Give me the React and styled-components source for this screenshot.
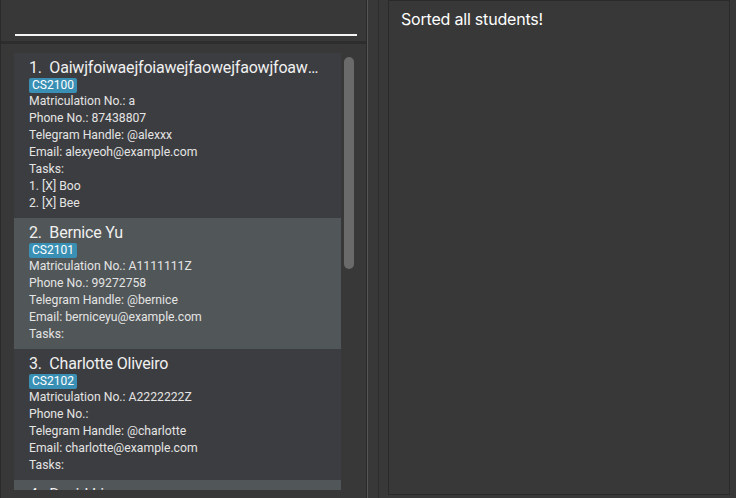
import React from 'react'
import styled, { createGlobalStyle } from 'styled-components'

const GlobalStyle = createGlobalStyle`
    html, body {
        margin: 0;
        padding: 0;
        background: #383838;
    }
    * {
        box-sizing: border-box;
    }
`

const Window = styled.div`
    width: 736px;
    height: 498px;
    display: flex;
    background: #383838;
    border-left: 1px solid #2a2a2a;
    font-family: Roboto, "Liberation Sans", sans-serif;
    overflow: hidden;
`

const LeftPane = styled.div`
    width: 366px;
    height: 100%;
    display: flex;
    flex-direction: column;
    border-right: 1px solid #2a2a2a;
    box-shadow: 1px 0 0 #555555;
`

const SearchBar = styled.div`
    height: 41px;
    padding: 34px 9px 0 14px;
`

const SearchLine = styled.div`
    height: 2px;
    background: #f4f4f4;
`

const Divider = styled.div`
    height: 3px;
    background: #2d2d2d;
`

const ListArea = styled.div`
    flex: 1;
    display: flex;
    padding: 9px 0 8px 13px;
    min-height: 0;
`

const List = styled.div`
    width: 327px;
    height: 100%;
    overflow: hidden;
    display: flex;
    flex-direction: column;
`

const Track = styled.div`
    width: 25px;
    padding: 4px 0 0 3px;
`

const Thumb = styled.div`
    width: 10px;
    height: 212px;
    border-radius: 5px;
    background: #6a6a6a;
`

const Card = styled.div`
    flex: none;
    padding: 5px 15px 6px 15px;
    display: flex;
    flex-direction: column;
    align-items: flex-start;
    background: ${(p) => (p.odd ? '#515658' : '#3c3d40')};
`

const Name = styled.div`
    width: 100%;
    font-size: 16px;
    line-height: 19px;
    color: #f0f0f0;
    white-space: nowrap;
    overflow: hidden;
    text-overflow: ellipsis;
    letter-spacing: -0.2px;
`

const Tag = styled.span`
    display: block;
    margin-top: 1px;
    padding: 0 3px;
    height: 15px;
    line-height: 15px;
    font-size: 12px;
    color: #ffffff;
    background: #3a8fb5;
    border-radius: 2px;
`

const Detail = styled.div`
    font-size: 12.2px;
    line-height: 17px;
    color: #e4e4e4;
    white-space: nowrap;
`

const Spacer = styled.div`
    width: 21px;
    display: flex;
    justify-content: center;
    padding-left: 1px;
`

const SpacerLine = styled.div`
    width: 1px;
    height: 100%;
    background: #2c2c2c;
`

const ResultBox = styled.div`
    width: 342px;
    height: 495px;
    border: 1px solid #2a2a2a;
    padding: 9px 12px;
    font-family: Inter, Roboto, sans-serif;
    font-size: 16px;
    line-height: 19px;
    color: #ffffff;
    letter-spacing: -0.2px;
`

const students = [
    {
        name: 'Oaiwjfoiwaejfoiawejfaowejfaowjfoawefoiawejfoiawe',
        tag: 'CS2100',
        matric: 'a',
        phone: '87438807',
        tele: '@alexxx',
        email: 'alexyeoh@example.com',
        tasks: ['[X] Boo', '[X] Bee'],
    },
    {
        name: 'Bernice Yu',
        tag: 'CS2101',
        matric: 'A1111111Z',
        phone: '99272758',
        tele: '@bernice',
        email: 'berniceyu@example.com',
        tasks: [],
    },
    {
        name: 'Charlotte Oliveiro',
        tag: 'CS2102',
        matric: 'A2222222Z',
        phone: '',
        tele: '@charlotte',
        email: 'charlotte@example.com',
        tasks: [],
    },
    {
        name: 'David Li',
        tag: 'CS2103',
        matric: 'A3333333Z',
        phone: '91031282',
        tele: '@david',
        email: 'lidavid@example.com',
        tasks: [],
    },
]

const StudentCard = ({ student, index }) => (
    <Card odd={index % 2 === 1}>
        <Name>{index + 1}.&nbsp; {student.name}</Name>
        <Tag>{student.tag}</Tag>
        <Detail>Matriculation No.: {student.matric}</Detail>
        <Detail>Phone No.: {student.phone}</Detail>
        <Detail>Telegram Handle: {student.tele}</Detail>
        <Detail>Email: {student.email}</Detail>
        <Detail>Tasks:</Detail>
        {student.tasks.map((t, i) => (
            <Detail key={i}>
                {i + 1}. {t}
            </Detail>
        ))}
    </Card>
)

const App = () => {
    return (
        <>
            <GlobalStyle />
            <Window>
                <LeftPane>
                    <SearchBar>
                        <SearchLine />
                    </SearchBar>
                    <Divider />
                    <ListArea>
                        <List>
                            {students.map((s, i) => (
                                <StudentCard key={i} student={s} index={i} />
                            ))}
                        </List>
                        <Track>
                            <Thumb />
                        </Track>
                    </ListArea>
                </LeftPane>
                <Spacer>
                    <SpacerLine />
                </Spacer>
                <ResultBox>Sorted all students!</ResultBox>
            </Window>
        </>
    )
}

export default App
